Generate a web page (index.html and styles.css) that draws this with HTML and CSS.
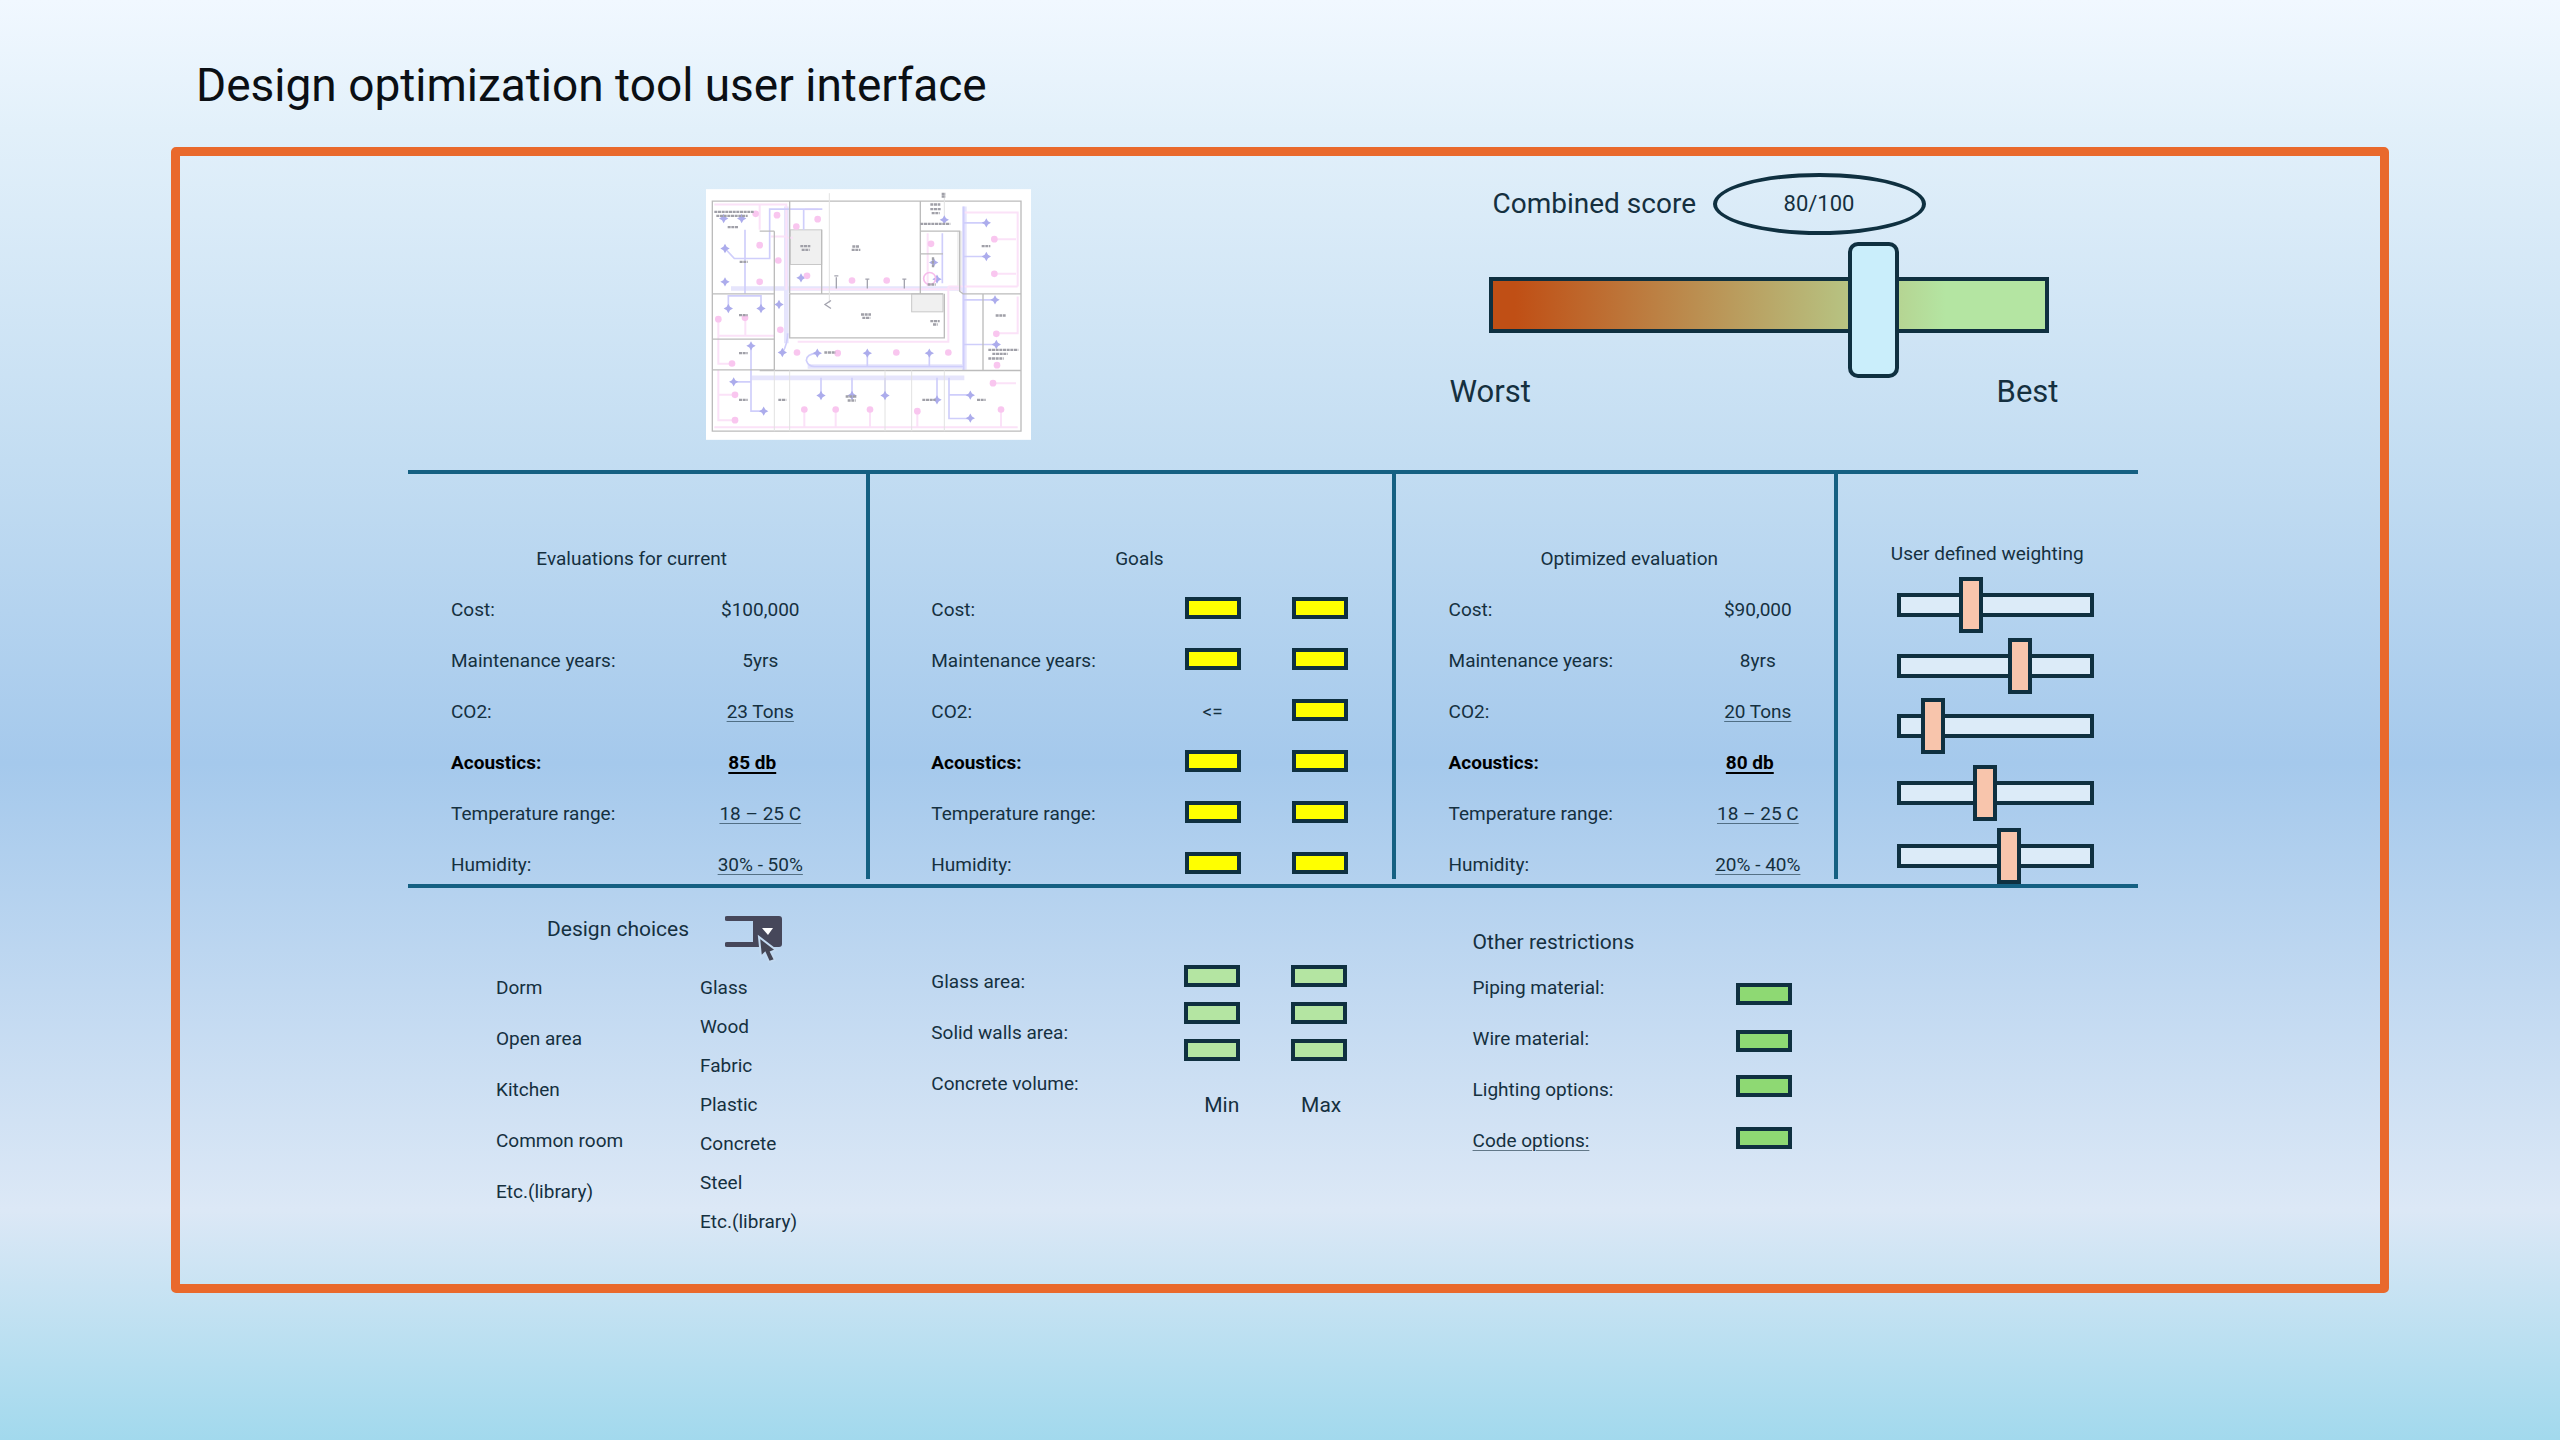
FILE: index.html
```html
<!DOCTYPE html>
<html lang="en">
<head>
<meta charset="utf-8">
<meta name="viewport" content="width=device-width, initial-scale=1">
<title>Design optimization tool user interface</title>
<link rel="stylesheet" href="styles.css">
</head>
<body>
<main class="page">
  <h1 class="page-title">Design optimization tool user interface</h1>
  <section class="panel">

    <div class="overview">
      <figure class="plan">
        <svg class="plan-drawing" viewBox="75 58 975 752" role="img" aria-label="Floor plan">
          <rect x="75" y="58" width="975" height="752" fill="#fff"/>
          <g fill="#f0f0f0" stroke="#c8c8c8" stroke-width="3">
            <rect x="328" y="180" width="94" height="104"/>
            <rect x="692" y="372" width="94" height="54"/>
            <rect x="828" y="184" width="20" height="180" stroke="none"/>
          </g>
          <g fill="none" stroke="#e6e5fc" stroke-width="14">
            <path d="M150 356H850M316 110V520M850 110V600M380 590H850M212 624H850"/>
          </g>
          <g fill="none" stroke="#fbe2f8" stroke-width="6">
            <path d="M100 104H316V360M236 104V180M270 200H316M336 204H320M350 516H802V350M802 350H1010M850 128H1010V350M940 208H1005M940 312H1005M1010 380V490H945M112 450V498H280M193 450V498M112 500V582H153M112 600V751H162M112 675H162M372 118H412M327 358H840M370 720V770M464 720V770M567 720V770M709 724V770M960 720V770M936 640H1005M740 190V350M100 772H1010"/>
          </g>
          <g fill="none" stroke="#cfcefb" stroke-width="5">
            <path d="M132 236L160 266H266V118H424M368 118V180M192 180V372M142 416V378H240V416M210 530V724H248M158 636H210M848 159H915M848 260H915M848 390H940M848 524H940M848 110V600M409 550Q376 552 376 572Q382 590 400 590H848M559 550V590M745 550V590M420 624V677M513 624V677M612 624V677M768 624V690M804 624V746H868M804 675H868M305 548Q320 520 320 490M784 190V340M360 325L380 318"/>
          </g>
          <g fill="none" stroke="#bcbcbc" stroke-width="4">
            <path d="M94 94H1020V784H94ZM326 94V370M94 372H280M280 184V600M236 184H280M326 372H786M326 372V504H790V372M94 508H280M94 600H280M236 602H1020M718 94V370M718 184H836V364L846 372H1020M906 372V602M422 180V370M718 252H786"/>
          </g>
          <g fill="none" stroke="#e2e2e2" stroke-width="3">
            <path d="M326 602V784M612 602V784M692 602V784M790 602V784M280 602V784M445 70V400M790 70V150"/>
          </g>
          <g fill="none" stroke="#a3a3ae" stroke-width="4">
            <path d="M466 322V356M559 326V356M670 326V356M450 392L432 404L450 416M460 318H472M553 328H565M664 328H676"/>
          </g>
          <g fill="#acacec">
            <path id="supply" d="M132 222L137 231L146 236L137 241L132 250L127 241L118 236L127 231Z"/>
            <use href="#supply" y="100"/>
            <use href="#supply" x="10" y="180"/>
            <use href="#supply" x="108" y="180"/>
            <use href="#supply" x="-4" y="-90"/>
            <use href="#supply" x="50" y="-90"/>
            <use href="#supply" x="78" y="292"/>
            <use href="#supply" x="26" y="400"/>
            <use href="#supply" x="116" y="488"/>
            <use href="#supply" x="172" y="312"/>
            <use href="#supply" x="162" y="168"/>
            <use href="#supply" x="277" y="314"/>
            <use href="#supply" x="427" y="314"/>
            <use href="#supply" x="613" y="314"/>
            <use href="#supply" x="288" y="441"/>
            <use href="#supply" x="381" y="441"/>
            <use href="#supply" x="480" y="441"/>
            <use href="#supply" x="636" y="454"/>
            <use href="#supply" x="736" y="440"/>
            <use href="#supply" x="736" y="509"/>
            <use href="#supply" x="784" y="-77"/>
            <use href="#supply" x="784" y="24"/>
            <use href="#supply" x="810" y="154"/>
            <use href="#supply" x="814" y="288"/>
            <use href="#supply" x="228" y="88"/>
            <use href="#supply" x="626" y="42"/>
            <use href="#supply" x="636" y="92"/>
            <use href="#supply" x="658" y="-86"/>
          </g>
          <g fill="#f9c6ef">
            <circle id="exhaust" cx="236" cy="226" r="10"/>
            <use href="#exhaust" y="110"/>
            <use href="#exhaust" x="-12" y="-94"/>
            <use href="#exhaust" x="52" y="-90"/>
            <use href="#exhaust" x="110" y="-56"/>
            <use href="#exhaust" x="174" y="-78"/>
            <use href="#exhaust" x="56" y="46"/>
            <use href="#exhaust" x="62" y="254"/>
            <use href="#exhaust" x="-124" y="222"/>
            <use href="#exhaust" x="-44" y="218"/>
            <use href="#exhaust" x="-83" y="355"/>
            <use href="#exhaust" x="-74" y="449"/>
            <use href="#exhaust" x="-74" y="525"/>
            <use href="#exhaust" x="112" y="322"/>
            <use href="#exhaust" x="234" y="324"/>
            <use href="#exhaust" x="410" y="322"/>
            <use href="#exhaust" x="566" y="322"/>
            <use href="#exhaust" x="277" y="106"/>
            <use href="#exhaust" x="381" y="106"/>
            <use href="#exhaust" x="134" y="493"/>
            <use href="#exhaust" x="228" y="493"/>
            <use href="#exhaust" x="331" y="493"/>
            <use href="#exhaust" x="473" y="498"/>
            <use href="#exhaust" x="724" y="493"/>
            <use href="#exhaust" x="700" y="414"/>
            <use href="#exhaust" x="704" y="-18"/>
            <use href="#exhaust" x="704" y="86"/>
            <use href="#exhaust" x="710" y="266"/>
            <use href="#exhaust" x="712" y="360"/>
            <use href="#exhaust" x="514" y="-4"/>
            <use href="#exhaust" x="142" y="92"/>
          </g>
          <circle cx="746" cy="326" r="18" fill="none" stroke="#f7bdec" stroke-width="5"/>
          <g fill="none" stroke="#a0a0a8" stroke-width="7" stroke-dasharray="9 2">
            <path d="M100 126H218M106 138H200M140 172H172M358 229H388M362 240H386M514 230H536M512 240H538M540 434H570M544 444H568M748 454H776M756 464H770M176 276H200M174 436H200M174 550H200M174 690H200M292 690H316M494 680H528M500 692H524M724 690H764M888 690H914M944 437H974M902 229H928M922 540H1012M934 552H980M922 566H968M718 162H808M748 104H778M748 118H780M752 130H776M782 72H794M782 80H794M756 262V292M740 344H764M430 548H464"/>
          </g>
        </svg>
      </figure>

      <div class="score">
        <div class="score-head">
          <label class="score-label" for="score">Combined score</label>
          <output class="score-value" for="score">80/100</output>
        </div>
        <input class="score-slider" id="score" type="range" min="0" max="100" value="71">
        <div class="score-ends"><span>Worst</span><span>Best</span></div>
      </div>
    </div>

    <div class="board columns">
      <div class="column">
        <table class="metrics metrics-current">
          <caption>Evaluations for current</caption>
          <tr><th scope="row">Cost:</th><td>$100,000</td></tr>
          <tr><th scope="row">Maintenance years:</th><td>5yrs</td></tr>
          <tr><th scope="row">CO2:</th><td><span class="noted">23 Tons</span></td></tr>
          <tr class="key"><th scope="row">Acoustics:</th><td><span class="noted">85 db</span></td></tr>
          <tr><th scope="row">Temperature range:</th><td><span class="noted">18 – 25 C</span></td></tr>
          <tr><th scope="row">Humidity:</th><td><span class="noted">30% - 50%</span></td></tr>
        </table>
      </div>
      <div class="column">
        <table class="metrics metrics-goals">
          <caption>Goals</caption>
          <tr><th scope="row">Cost:</th><td><input class="field" aria-label="Cost, min"></td><td><input class="field" aria-label="Cost, max"></td></tr>
          <tr><th scope="row">Maintenance years:</th><td><input class="field" aria-label="Maintenance years, min"></td><td><input class="field" aria-label="Maintenance years, max"></td></tr>
          <tr><th scope="row">CO2:</th><td><span class="limit">&lt;=</span></td><td><input class="field" aria-label="CO2, max"></td></tr>
          <tr class="key"><th scope="row">Acoustics:</th><td><input class="field" aria-label="Acoustics, min"></td><td><input class="field" aria-label="Acoustics, max"></td></tr>
          <tr><th scope="row">Temperature range:</th><td><input class="field" aria-label="Temperature range, min"></td><td><input class="field" aria-label="Temperature range, max"></td></tr>
          <tr><th scope="row">Humidity:</th><td><input class="field" aria-label="Humidity, min"></td><td><input class="field" aria-label="Humidity, max"></td></tr>
        </table>
      </div>
      <div class="column">
        <table class="metrics metrics-optimized">
          <caption>Optimized evaluation</caption>
          <tr><th scope="row">Cost:</th><td>$90,000</td></tr>
          <tr><th scope="row">Maintenance years:</th><td>8yrs</td></tr>
          <tr><th scope="row">CO2:</th><td><span class="noted">20 Tons</span></td></tr>
          <tr class="key"><th scope="row">Acoustics:</th><td><span class="noted">80 db</span></td></tr>
          <tr><th scope="row">Temperature range:</th><td><span class="noted">18 – 25 C</span></td></tr>
          <tr><th scope="row">Humidity:</th><td><span class="noted">20% - 40%</span></td></tr>
        </table>
      </div>
      <div class="column weighting">
        <h2 class="weighting-title">User defined weighting</h2>
        <div class="weights">
          <input class="weight" type="range" value="35" aria-label="Cost weight">
          <input class="weight" type="range" value="65" aria-label="Maintenance weight">
          <input class="weight" type="range" value="12" aria-label="CO2 weight">
          <input class="weight" type="range" value="44" aria-label="Acoustics weight">
          <input class="weight" type="range" value="58" aria-label="Temperature weight">
        </div>
      </div>
    </div>

    <div class="options columns">
      <section class="choices">
        <div class="choices-head">
          <h2 class="section-title">Design choices</h2>
          <button class="picker" type="button" aria-label="Open design choices">
            <svg class="picker-icon" viewBox="0 0 58 48" aria-hidden="true">
              <path d="M2 1H54a3 3 0 0 1 3 3V29a3 3 0 0 1-3 3H2a2 2 0 0 1 0-5H28V6H2a2 2 0 0 1 0-5Z" fill="#46475a"/>
              <path d="M37 13H48L43 20Z" fill="#fff"/>
              <path d="M34 22L36 42L40 38L44 47L50 45L46 37L51 35Z" fill="#454654" stroke="#c3daf1" stroke-width="2"/>
            </svg>
          </button>
        </div>
        <div class="choice-lists">
          <ul class="list">
            <li>Dorm</li><li>Open area</li><li>Kitchen</li><li>Common room</li><li>Etc.(library)</li>
          </ul>
          <ul class="list list-tight">
            <li>Glass</li><li>Wood</li><li>Fabric</li><li>Plastic</li><li>Concrete</li><li>Steel</li><li>Etc.(library)</li>
          </ul>
        </div>
      </section>

      <section class="amounts">
        <ul class="list">
          <li><label for="glass-min">Glass area:</label></li>
          <li><label for="walls-min">Solid walls area:</label></li>
          <li><label for="concrete-min">Concrete volume:</label></li>
        </ul>
        <div class="amount-fields">
          <input class="field field-light" id="glass-min"><input class="field field-light" aria-label="Glass area, max">
          <input class="field field-light" id="walls-min"><input class="field field-light" aria-label="Solid walls area, max">
          <input class="field field-light" id="concrete-min"><input class="field field-light" aria-label="Concrete volume, max">
          <div class="bounds"><span>Min</span><span>Max</span></div>
        </div>
      </section>

      <section class="restrictions">
        <h2 class="section-title">Other restrictions</h2>
        <div class="restriction-rows">
          <ul class="list">
            <li><label for="piping">Piping material:</label></li>
            <li><label for="wire">Wire material:</label></li>
            <li><label for="lighting">Lighting options:</label></li>
            <li><label class="noted" for="code">Code options:</label></li>
          </ul>
          <div class="restriction-fields">
            <input class="field field-green" id="piping">
            <input class="field field-green" id="wire">
            <input class="field field-green" id="lighting">
            <input class="field field-green" id="code">
          </div>
        </div>
      </section>
    </div>
  </section>
</main>
</body>
</html>
```
FILE: styles.css
```css
:root {
  --ink: #15303f;
  --rule: #156082;
  --outline: #0f3040;
}

* { box-sizing: border-box; }

body {
  margin: 0;
  min-height: 100vh;
  font-family: Roboto, "Liberation Sans", sans-serif;
  font-size: 19px;
  line-height: 26px;
  color: var(--ink);
  background: linear-gradient(#f1f8ff 0%, #e2f0fa 9%, #c3ddf2 32%, #a5c9ec 53%, #dce8f6 84%, #a2d9ed 100%);
}

.page { padding: 55px 171px 0; }

.page-title {
  margin: 0 0 32px 25px;
  font-size: 46px;
  font-weight: 400;
  line-height: 60px;
  color: #0b0f14;
}

.panel {
  border: 9px solid #e9692c;
  border-radius: 5px;
  padding-bottom: 36px;
}

.overview {
  display: grid;
  grid-template-columns: 325px 609px;
  column-gap: 25%;
  padding: 17px 0 30px 526px;
  align-items: start;
}

.plan { margin: 16px 0 0; }
.plan-drawing { display: block; width: 325px; height: 251px; }

.score-head {
  display: flex;
  align-items: center;
  gap: 20px;
  padding-left: 43px;
}
.score-label { font-size: 28px; line-height: 34px; width: 200px; white-space: nowrap; }
.score-value {
  width: 213px;
  height: 62px;
  border: 4px solid var(--outline);
  border-radius: 50%;
  font-size: 22px;
  line-height: 54px;
  text-align: center;
}
.score-slider, .weight {
  appearance: none;
  display: block;
  margin: 0;
  background: none;
}
.score-slider { width: 560px; height: 136px; margin: 2px 0 2px 39px; }
.score-slider::-webkit-slider-runnable-track {
  height: 56px;
  border: 4px solid var(--outline);
  background: linear-gradient(90deg, #c04f15 4%, #b4e5a2 82%);
}
.score-slider::-webkit-slider-thumb {
  appearance: none;
  width: 51px;
  height: 136px;
  margin-top: -39px;
  border: 4px solid var(--outline);
  border-radius: 10px;
  background: #caeefb;
}
.score-ends {
  display: flex;
  justify-content: space-between;
  font-size: 31px;
  line-height: 34px;
}

.columns {
  display: grid;
  grid-template-columns: 462fr 525fr 442fr 300fr;
  margin: 0 11% 0 228px;
}

.board {
  border-top: 4px solid var(--rule);
  border-bottom: 4px solid var(--rule);
  padding-bottom: 5px;
}
.column { border-right: 4px solid var(--rule); }
.column:last-child { border-right: 0; }

.metrics {
  width: calc(100% - 83px);
  margin-left: 43px;
  border-collapse: collapse;
  table-layout: fixed;
}
.metrics-optimized { width: calc(100% - 63px); margin-left: 53px; }
.metrics-goals { width: calc(100% - 105px); margin-left: 61px; }
.metrics caption { padding: 72px 14px 25px 0; }
.metrics-goals caption { padding-right: 0; }
.metrics th, .metrics td {
  padding: 0 0 25px;
  font-weight: 400;
  vertical-align: top;
  white-space: nowrap;
}
.metrics th { text-align: left; }
.metrics td { width: 132px; text-align: center; }
.metrics tr:last-child > * { padding-bottom: 0; }
.metrics .key > * { font-weight: 700; color: #000; }
.metrics .key td { padding-right: 16px; }
.metrics-goals td, .metrics-goals .key td { width: 107px; height: 26px; padding-right: 51px; }
.metrics-goals td:last-child, .metrics-goals .key td:last-child { width: 56px; padding-right: 0; }

.noted {
  text-decoration: underline 1px rgb(21 48 63 / 60%);
  text-underline-offset: 3px;
}
.key .noted { text-decoration: underline 2px #000; }

.field {
  display: block;
  width: 56px;
  height: 22px;
  padding: 0 4px;
  border: 4px solid var(--outline);
  border-radius: 0;
  background: #ffff00;
  font: inherit;
  font-size: 12px;
}
.field-light { background: #b4e5a2; }
.field-green { background: #8ed973; }

.weighting { padding-left: 53px; }
.weighting-title {
  margin: 67px 0 10px;
  font-size: 19px;
  font-weight: 400;
  white-space: nowrap;
}
.weights {
  display: grid;
  grid-template-rows: 61px 60px 67px 63px 51px;
  padding-left: 6px;
}
.weight { width: 197px; height: 56px; }
.weight::-webkit-slider-runnable-track {
  height: 24px;
  border: 4px solid var(--outline);
  background: #dcebf8;
}
.weight::-webkit-slider-thumb {
  appearance: none;
  width: 24px;
  height: 56px;
  margin-top: -20px;
  border: 4px solid var(--outline);
  border-radius: 0;
  background: #f8c5ac;
}

.section-title {
  margin: 0;
  font-size: 21px;
  font-weight: 400;
  line-height: 28px;
}
.list {
  margin: 0;
  padding: 0;
  list-style: none;
}
.list li { height: 51px; white-space: nowrap; }
.list-tight li { height: 39px; }

.choices { padding-top: 27px; }
.choices-head {
  display: flex;
  align-items: flex-start;
  gap: 36px;
  height: 60px;
  padding-left: 139px;
}
.picker {
  padding: 0;
  border: 0;
  background: none;
}
.picker-icon { display: block; width: 58px; height: 48px; }
.choice-lists {
  display: grid;
  grid-template-columns: 204px auto;
  padding-left: 88px;
}

.amounts {
  display: grid;
  grid-template-columns: 253px auto;
  align-items: start;
  padding: 77px 44px 0 61px;
}
.amounts .list { padding-top: 4px; }
.amount-fields {
  display: grid;
  grid-template-columns: 107px 56px;
  row-gap: 15px;
}
.bounds {
  grid-column: 1 / -1;
  display: flex;
  justify-content: space-between;
  margin-top: 16px;
  padding: 0 6px 0 20px;
  font-size: 21px;
}

.restrictions { padding: 40px 0 0 77px; }
.restrictions .section-title { margin-bottom: 19px; }
.restriction-rows {
  display: grid;
  grid-template-columns: 263px auto;
}
.restriction-fields {
  display: grid;
  grid-template-rows: 47px 45px 52px 22px;
  padding-top: 8px;
}
```
